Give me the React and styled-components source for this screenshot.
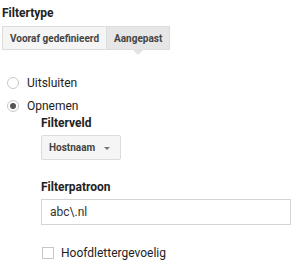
import React, { useState } from 'react';
import styled, { createGlobalStyle } from 'styled-components';

const Global = createGlobalStyle`
  body {
    margin: 0;
    background: #fff;
    font-family: Roboto, "Liberation Sans", Arial, sans-serif;
    color: #333;
  }
`;

export default function App() {
  const [mode, setMode] = useState('include');
  const [tab, setTab] = useState('custom');
  const [caseSensitive, setCaseSensitive] = useState(false);

  return (
    <Page>
      <Global />
      <Title>Filtertype</Title>
      <Segmented>
        <SegButton $active={tab === 'predefined'} onClick={() => setTab('predefined')}>
          Vooraf gedefinieerd
        </SegButton>
        <SegButton $active={tab === 'custom'} onClick={() => setTab('custom')}>
          Aangepast
        </SegButton>
      </Segmented>

      <Options>
        <RadioRow onClick={() => setMode('exclude')}>
          <Radio $checked={mode === 'exclude'} />
          <RadioLabel>Uitsluiten</RadioLabel>
        </RadioRow>
        <RadioRow onClick={() => setMode('include')}>
          <Radio $checked={mode === 'include'} />
          <RadioLabel>Opnemen</RadioLabel>
        </RadioRow>
      </Options>

      <Details>
        <FieldLabel>Filterveld</FieldLabel>
        <Dropdown>
          Hostnaam
          <Caret />
        </Dropdown>

        <FieldLabel $spaced>Filterpatroon</FieldLabel>
        <TextInput defaultValue="abc\.nl" />

        <CheckRow onClick={() => setCaseSensitive(!caseSensitive)}>
          <Box $checked={caseSensitive} />
          <CheckLabel>Hoofdlettergevoelig</CheckLabel>
        </CheckRow>
      </Details>
    </Page>
  );
}

const Page = styled.div`
  width: 302px;
  height: 267px;
  padding: 5px 0 0 2px;
  box-sizing: border-box;
`;

const Title = styled.div`
  font-size: 12px;
  font-weight: bold;
  line-height: 16px;
  color: #222;
`;

const Segmented = styled.div`
  display: flex;
  margin-top: 5px;
`;

const SegButton = styled.div`
  position: relative;
  height: 24px;
  box-sizing: border-box;
  padding: 0 7px;
  display: flex;
  align-items: center;
  font-size: 10px;
  font-weight: bold;
  color: #444;
  background: ${p => (p.$active ? '#e6e6e6' : '#f5f5f5')};
  border: 1px solid #dcdcdc;
  cursor: pointer;

  & + & {
    border-left: none;
  }

  ${p =>
    p.$active &&
    `
    &::after {
      content: '';
      position: absolute;
      left: 50%;
      top: 100%;
      margin-left: -6px;
      border-left: 6px solid transparent;
      border-right: 6px solid transparent;
      border-top: 6px solid #e2e2e2;
    }
  `}
`;

const Options = styled.div`
  margin-top: 25px;
  padding-left: 5px;
  display: flex;
  flex-direction: column;
  gap: 8px;
`;

const RadioRow = styled.div`
  display: flex;
  align-items: center;
  height: 15px;
  cursor: pointer;
`;

const Radio = styled.span`
  width: 12px;
  height: 12px;
  box-sizing: border-box;
  border: 1px solid #c8c8c8;
  border-radius: 50%;
  background: #fff;
  display: flex;
  align-items: center;
  justify-content: center;

  &::after {
    content: '';
    width: 6px;
    height: 6px;
    border-radius: 50%;
    background: ${p => (p.$checked ? '#555' : 'transparent')};
  }
`;

const RadioLabel = styled.span`
  margin-left: 8px;
  font-size: 12px;
  color: #222;
`;

const Details = styled.div`
  padding-left: 39px;
  display: flex;
  flex-direction: column;
  align-items: flex-start;
`;

const FieldLabel = styled.div`
  font-size: 12px;
  font-weight: bold;
  line-height: 16px;
  color: #222;
  margin-top: ${p => (p.$spaced ? '19px' : '2px')};
`;

const Dropdown = styled.div`
  margin-top: 4px;
  width: 80px;
  height: 25px;
  box-sizing: border-box;
  border: 1px solid #dcdcdc;
  border-radius: 2px;
  background: #f5f5f5;
  display: flex;
  align-items: center;
  padding: 0 7px;
  font-size: 10px;
  font-weight: bold;
  color: #444;
`;

const Caret = styled.span`
  margin-left: auto;
  margin-right: 3px;
  margin-top: 2px;
  border-left: 3.5px solid transparent;
  border-right: 3.5px solid transparent;
  border-top: 3.5px solid #777;
`;

const TextInput = styled.input`
  margin-top: 4px;
  width: 250px;
  height: 26px;
  box-sizing: border-box;
  border: 1px solid #d4d4d4;
  padding: 0 8px;
  font-family: Roboto, "Liberation Sans", Arial, sans-serif;
  font-size: 12px;
  color: #333;
  outline: none;
`;

const CheckRow = styled.div`
  margin-top: 21px;
  display: flex;
  align-items: center;
  padding-left: 1px;
  cursor: pointer;
`;

const Box = styled.span`
  width: 12px;
  height: 12px;
  box-sizing: border-box;
  border: 1px solid #c8c8c8;
  background: ${p => (p.$checked ? '#555' : '#fff')};
`;

const CheckLabel = styled.span`
  margin-left: 7px;
  font-size: 12px;
  color: #222;
`;
